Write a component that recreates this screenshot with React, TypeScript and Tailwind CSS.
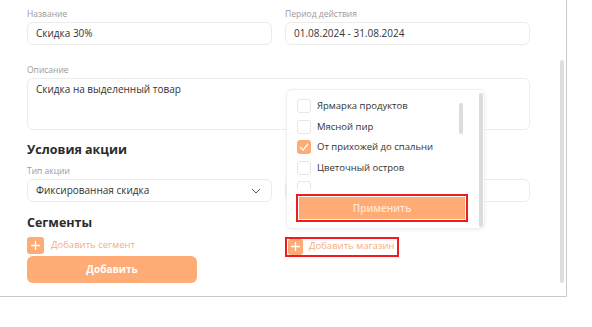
import React from "react";

const stores = ["Ярмарка продуктов", "Мясной пир", "От прихожей до спальни", "Цветочный остров"];

const PlusBox = ({ size }: { size: string }) => (
  <span className={`${size} shrink-0 flex items-center justify-center rounded-[3px] bg-[#ffab76]`}>
    <svg width="11" height="11" viewBox="0 0 11 11" fill="none">
      <path d="M5.5 1v9M1 5.5h9" stroke="#fff" strokeWidth="1.3" />
    </svg>
  </span>
);

const Label = ({ children }: { children: React.ReactNode }) => (
  <div className="h-[11px] text-[8.5px] leading-[11px] text-[#9a9a9a] mb-[3px]">{children}</div>
);

const Field = ({ children, className = "" }: { children?: React.ReactNode; className?: string }) => (
  <div className={`h-[23px] rounded-[6px] border border-[#ececec] px-[8px] flex items-center text-[10px] text-[#333] ${className}`}>
    {children}
  </div>
);

export default function App() {
  const checked = 2;
  return (
    <div className="w-[592px] h-[327px] bg-white" style={{ fontFamily: "'Open Sans', sans-serif" }}>
      <div className="relative w-[567px] h-[297px] border-r border-b border-[#c9c9c9] rounded-br-[2px] pl-[27px] pr-[36px] pt-[8px]">
        <div className="grid grid-cols-2 gap-x-[13px]">
          <div>
            <Label>Название</Label>
            <Field>Скидка 30%</Field>
          </div>
          <div>
            <Label>Период действия</Label>
            <Field>01.08.2024 - 31.08.2024</Field>
          </div>
        </div>

        <div className="mt-[19px]">
          <Label>Описание</Label>
          <div className="h-[52px] rounded-[6px] border border-[#ececec] px-[8px] pt-[3px] text-[10px] text-[#333]">
            Скидка на выделенный товар
          </div>
        </div>

        <div className="mt-[12px] h-[16px] text-[12.5px] leading-[16px] font-bold text-[#2b2b2b]">Условия акции</div>
        <div className="mt-[7px] grid grid-cols-2 gap-x-[13px]">
          <div>
            <Label>Тип акции</Label>
            <Field className="justify-between">
              <span>Фиксированная скидка</span>
              <svg width="10" height="6" viewBox="0 0 10 6" fill="none" className="mr-[2px]">
                <path d="M1 1l4 4 4-4" stroke="#555" strokeWidth="1" />
              </svg>
            </Field>
          </div>
          <div className="pt-[14px]">
            <Field />
          </div>
        </div>

        <div className="mt-[13px] h-[16px] text-[12.5px] leading-[16px] font-bold text-[#2b2b2b]">Сегменты</div>
        <div className="mt-[5px] grid grid-cols-2 gap-x-[13px] h-[18px]">
          <div className="flex items-center gap-[7px] h-[18px]">
            <PlusBox size="w-[17px] h-[17px]" />
            <span className="text-[9.5px] text-[#f6ad80] whitespace-nowrap">Добавить сегмент</span>
          </div>
          <div className="-mt-[2px]">
            <div className="inline-flex items-center gap-[6px] h-[20px] border-2 border-[#ee1c1c] pl-[1px] pr-[3px] whitespace-nowrap">
              <PlusBox size="w-[15px] h-[16px]" />
              <span className="text-[9.5px] text-[#f6ad80]">Добавить магазин</span>
            </div>
          </div>
        </div>

        <button className="mt-[2px] w-[170px] h-[27px] rounded-[6px] bg-[#ffab76] text-white text-[10px] font-bold">
          Добавить
        </button>

        <div className="absolute left-[560px] top-[60px] w-[4px] h-[223px] rounded-full bg-[#dedede]" />

        <div className="absolute left-[286px] top-[89px] w-[199px] h-[140px] rounded-[6px] border border-[#efefef] bg-white shadow-[0_1px_4px_rgba(0,0,0,0.06)]">
          <div className="relative h-[99px] overflow-hidden pl-[10px] pt-[6px]">
            {stores.map((s, i) => (
              <div key={s} className="flex items-center gap-[6px] h-[20.5px]">
                <span
                  className={`w-[14px] h-[14px] rounded-[3px] flex items-center justify-center ${
                    i === checked ? "bg-[#ffab76]" : "border border-[#e6e6e6]"
                  }`}
                >
                  {i === checked && (
                    <svg width="10" height="8" viewBox="0 0 10 8" fill="none">
                      <path d="M1 4l3 3 5-6" stroke="#fff" strokeWidth="1.2" />
                    </svg>
                  )}
                </span>
                <span className="text-[9.5px] text-[#333]">{s}</span>
              </div>
            ))}
            <div className="flex items-center h-[20.5px]">
              <span className="w-[14px] h-[14px] rounded-[3px] border border-[#e6e6e6]" />
            </div>
            <div className="absolute left-[172px] top-[13px] w-[4px] h-[31px] rounded-full bg-[#dcdcdc]" />
          </div>
          <div className="pl-[9px] pt-[5px]">
            <div className="w-[172px] h-[28px] border-2 border-[#ee1c1c] p-[1px]">
              <div className="w-full h-full bg-[#ffab76] flex items-center justify-center text-[10px] font-semibold text-[#ffe6d6]">
                Применить
              </div>
            </div>
          </div>
          <div className="absolute left-[192px] top-[3px] w-[4px] h-[134px] rounded-full bg-[#dcdcdc]" />
        </div>
      </div>
    </div>
  );
}
